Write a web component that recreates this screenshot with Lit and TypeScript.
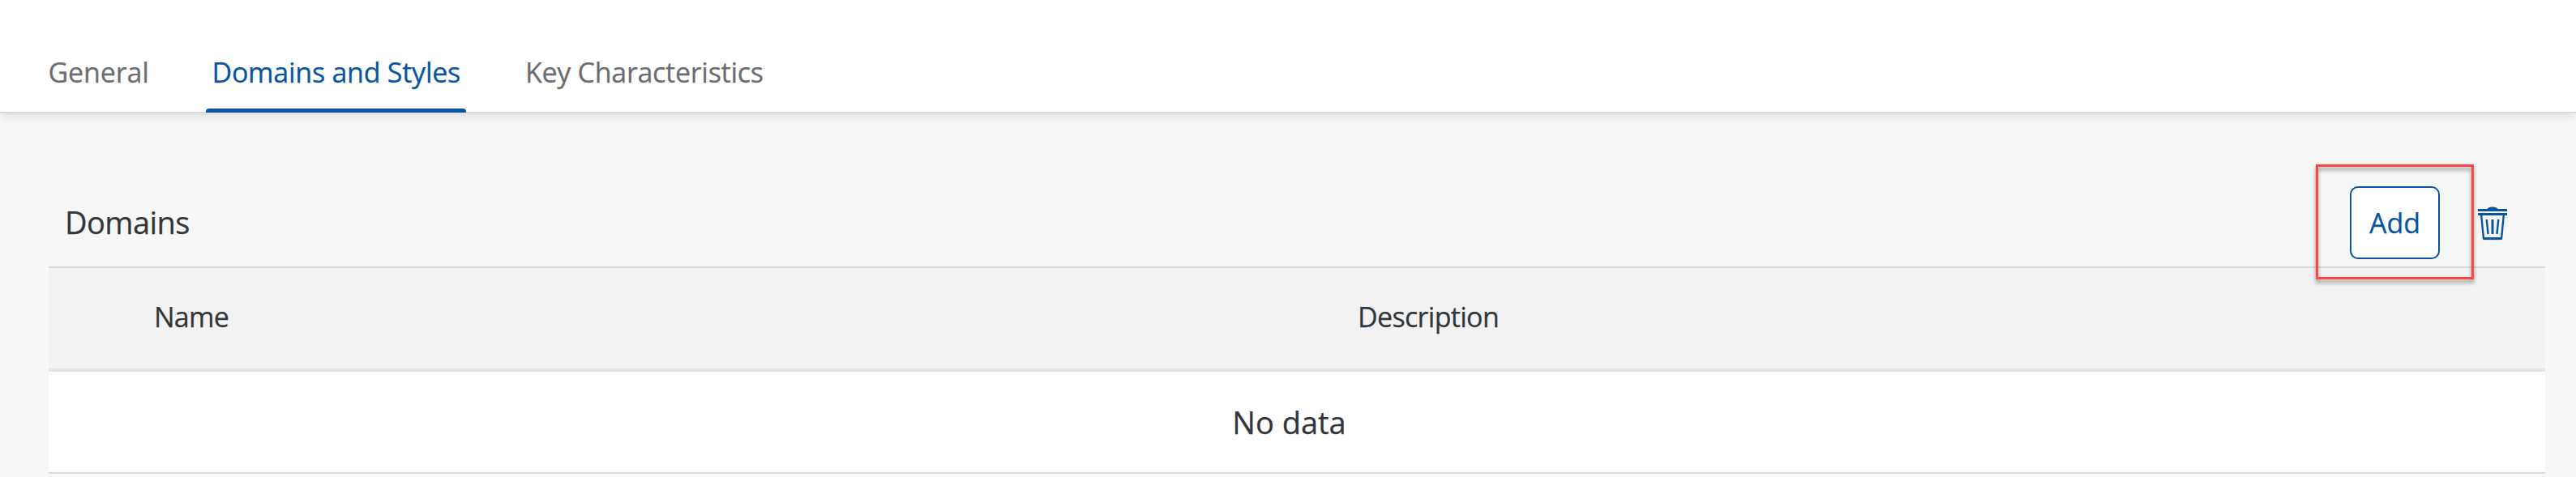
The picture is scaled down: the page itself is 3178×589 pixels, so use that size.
import { LitElement, html, css } from "lit";
import { customElement, state } from "lit/decorators.js";
import { classMap } from "lit/directives/class-map.js";

@customElement("app-tabs")
class AppTabs extends LitElement {
  static styles = css`
    :host {
      display: block;
      position: relative;
      z-index: 1;
      background: #fff;
      box-shadow: 0 4px 12px rgba(0, 0, 0, 0.1);
    }
    .bar {
      box-sizing: border-box;
      height: 140px;
      display: flex;
      gap: 66px;
      padding: 65px 0 0 51px;
      border-bottom: 2px solid #d9d9d9;
    }
    .tab {
      box-sizing: border-box;
      height: 74px;
      display: flex;
      flex-direction: column;
      justify-content: space-between;
      font-size: 34px;
      line-height: 48px;
      color: #6a6d70;
      cursor: pointer;
      white-space: nowrap;
    }
    .label { padding: 0 7.5px; }
    .general { width: 137px; letter-spacing: -0.15px; }
    .general .label { padding-left: 8.5px; }
    .domains { width: 320.5px; letter-spacing: -0.25px; }
    .key { letter-spacing: -0.29px; }
    .selected { color: #0854a0; }
    .line { height: 5px; border-radius: 4px 4px 0 0; }
    .selected .line { background: #0854a0; }
  `;
  @state() selected = "domains";
  render() {
    const tabs = [
      ["general", "General"],
      ["domains", "Domains and Styles"],
      ["key", "Key Characteristics"],
    ];
    return html`<nav class="bar">
      ${tabs.map(
        ([id, label]) => html`<div
          class=${classMap({ tab: true, [id]: true, selected: id === this.selected })}
          @click=${() => (this.selected = id)}
        ><span class="label">${label}</span><span class="line"></span></div>`
      )}
    </nav>`;
  }
}

@customElement("domains-table")
class DomainsTable extends LitElement {
  static styles = css`
    :host { display: block; color: #32363a; }
    .toolbar {
      box-sizing: border-box;
      height: 112px;
      display: flex;
      align-items: center;
      padding: 0 46px 0 20px;
      border-bottom: 2px solid #d9d9d9;
    }
    .title {
      flex: 1;
      margin: 0;
      font-size: 38px;
      line-height: 52px;
      font-weight: 400;
      letter-spacing: -0.55px;
    }
    .add-wrap { position: relative; margin: 1px 46px 0 0; }
    .add {
      box-sizing: border-box;
      display: block;
      width: 111px;
      height: 90px;
      padding: 0;
      border: 2px solid #0854a0;
      border-radius: 10px;
      background: #fff;
      color: #0854a0;
      font: inherit;
      font-size: 34px;
      line-height: 48px;
    }
    .highlight {
      position: absolute;
      box-sizing: border-box;
      inset: -27px -42px -25px;
      border: 3px solid #ff4545;
      filter: drop-shadow(0 4px 2.5px rgba(0, 0, 0, 0.42));
      pointer-events: none;
    }
    .trash { display: block; width: 38px; height: 44px; margin-top: 3px; }
    .head {
      box-sizing: border-box;
      height: 128px;
      display: grid;
      grid-template-columns: 1485px 1fr;
      align-items: center;
      padding: 0 0 4px 130px;
      background: #f2f2f2;
      border-bottom: 4px solid #e4e4e4;
      font-size: 34px;
      line-height: 48px;
    }
    .name { letter-spacing: -0.75px; }
    .desc { letter-spacing: -0.68px; }
    .empty {
      box-sizing: border-box;
      height: 126px;
      display: flex;
      align-items: center;
      justify-content: center;
      padding-right: 19px;
      background: #fff;
      border-bottom: 2px solid #d9d9d9;
      font-size: 38px;
      line-height: 52px;
    }
  `;
  render() {
    return html`
      <div class="toolbar">
        <h2 class="title">Domains</h2>
        <div class="add-wrap">
          <button class="add">Add</button>
          <div class="highlight"></div>
        </div>
        <svg class="trash" viewBox="0 0 38 44" fill="none" stroke="#0854a0" aria-label="Delete">
          <path d="M12.5 4.5C13 .6 25 .6 25.5 4.5Z" fill="#0854a0" stroke="none" />
          <path d="M1 5.5h36M1 10.5h36" stroke-width="3" />
          <path d="M5.2 12 8 40.7h22L32.8 12" stroke-width="2.4" stroke-linejoin="round" />
          <path d="M8 40.6h22" stroke-width="3" />
          <path d="M11.7 17 13.6 35M26.3 17 24.4 35" stroke-width="2.4" />
          <path d="M19 17V35" stroke-width="3" />
        </svg>
      </div>
      <div class="head"><span class="name">Name</span><span class="desc">Description</span></div>
      <div class="empty">No data</div>
    `;
  }
}

@customElement("app-root")
class AppRoot extends LitElement {
  static styles = css`
    :host {
      display: block;
      height: 589px;
      overflow: hidden;
      background: #f7f7f7;
      font-family: "Open Sans", "Noto Sans", sans-serif;
      -webkit-text-stroke: 0.25px currentColor;
    }
    .content { padding: 79px 38px 0 60px; }
  `;
  render() {
    return html`<app-tabs></app-tabs>
      <main class="content"><domains-table></domains-table></main>`;
  }
}
